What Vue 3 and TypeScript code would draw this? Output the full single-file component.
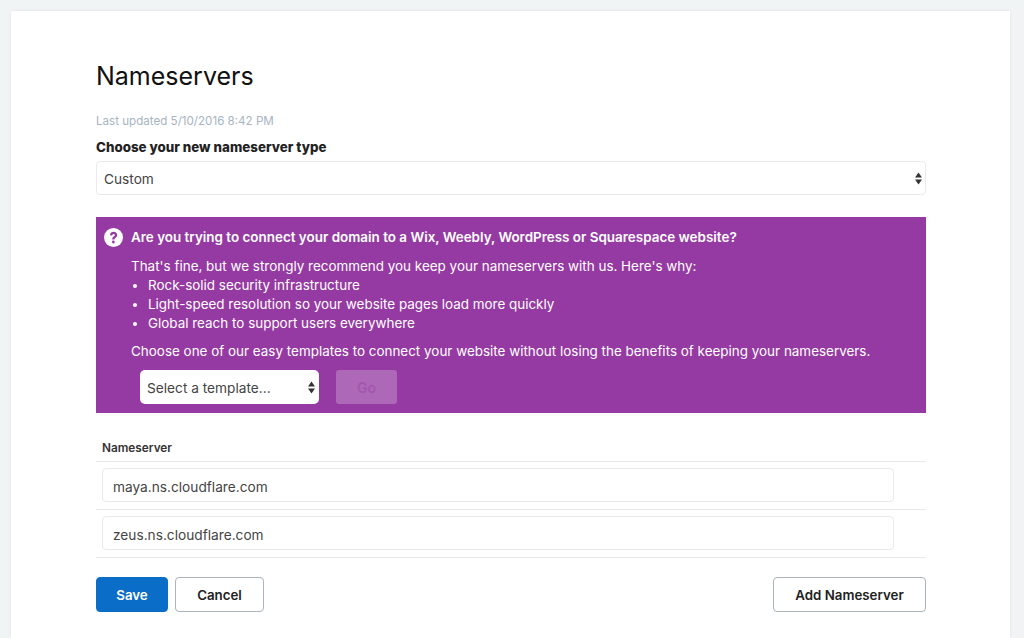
<script setup lang="ts">
const nameservers = ['maya.ns.cloudflare.com', 'zeus.ns.cloudflare.com']
const reasons = [
  'Rock-solid security infrastructure',
  'Light-speed resolution so your website pages load more quickly',
  'Global reach to support users everywhere',
]
</script>

<template>
  <div class="page">
    <div class="card">
      <h1>Nameservers</h1>
      <p class="updated">Last updated 5/10/2016 8:42 PM</p>
      <label class="type-label">Choose your new nameserver type</label>
      <div class="select-wrap">
        <select class="select">
          <option>Custom</option>
        </select>
        <svg class="arrows" width="7" height="13" viewBox="0 0 7 13">
          <path d="M3.5 0.5 L7 5.5 H0 Z M0 7.5 H7 L3.5 12.5 Z" fill="#333" />
        </svg>
      </div>

      <div class="notice">
        <div class="notice-head">
          <svg class="help" width="19" height="19" viewBox="0 0 19 19">
            <circle cx="9.5" cy="9.5" r="9.5" fill="#fff" />
            <path d="M5.9 7.3 C6 5.1 7.5 3.8 9.6 3.8 C11.7 3.8 13.2 5.1 13.2 7 C13.2 8.5 12.4 9.2 11.4 9.9 C10.7 10.4 10.5 10.7 10.5 11.6 H8.2 C8.2 10.1 8.6 9.3 9.7 8.6 C10.5 8.1 10.8 7.7 10.8 7.2 C10.8 6.5 10.3 6 9.6 6 C8.8 6 8.3 6.6 8.2 7.4 Z" fill="#963aa3" />
            <circle cx="9.35" cy="14" r="1.4" fill="#963aa3" />
          </svg>
          <strong>Are you trying to connect your domain to a Wix, Weebly, WordPress or Squarespace website?</strong>
        </div>
        <div class="notice-body">
          <p>That's fine, but we strongly recommend you keep your nameservers with us. Here's why:</p>
          <ul>
            <li v-for="r in reasons" :key="r">{{ r }}</li>
          </ul>
          <p class="choose">Choose one of our easy templates to connect your website without losing the benefits of keeping your nameservers.</p>
        </div>
        <div class="template-row">
          <div class="select-wrap template">
            <select class="select borderless">
              <option>Select a template...</option>
            </select>
            <svg class="arrows" width="7" height="13" viewBox="0 0 7 13">
              <path d="M3.5 0.5 L7 5.5 H0 Z M0 7.5 H7 L3.5 12.5 Z" fill="#333" />
            </svg>
          </div>
          <button class="go" disabled>Go</button>
        </div>
      </div>

      <div class="table-head">Nameserver</div>
      <div v-for="ns in nameservers" :key="ns" class="ns-row">
        <input class="ns-input" :value="ns" />
      </div>

      <div class="actions">
        <button class="btn primary">Save</button>
        <button class="btn cancel">Cancel</button>
        <button class="btn add">Add Nameserver</button>
      </div>
    </div>
  </div>
</template>

<style>
html,
body {
  margin: 0;
  background: #f1f4f5;
}
</style>

<style scoped>
.page {
  height: 638px;
  padding: 11px 14px 0 11px;
  box-sizing: border-box;
  overflow: hidden;
  font-family: Inter, "Liberation Sans", sans-serif;
  color: #333;
}

.card {
  height: 627px;
  box-sizing: border-box;
  background: #fff;
  padding: 47px 84px 0 85px;
  box-shadow: 0 0 3px rgba(0, 0, 0, 0.08);
}

h1 {
  margin: 0;
  font-size: 25px;
  line-height: 36px;
  font-weight: 400;
  color: #111;
}

.updated {
  margin: 18px 0 0;
  font-size: 11.6px;
  line-height: 18px;
  color: #a6b4bf;
}

.type-label {
  display: block;
  margin-top: 8px;
  font-size: 13.35px;
  line-height: 18px;
  font-weight: 800;
  color: #222;
}

.select-wrap {
  position: relative;
  margin-top: 5px;
}

.select {
  display: block;
  width: 100%;
  height: 34px;
  padding: 2px 7px 0;
  appearance: none;
  background: #fff;
  border: 1px solid #e8ebed;
  border-radius: 4px;
  font: 400 13.7px Inter, "Liberation Sans", sans-serif;
  color: #444;
}

.borderless {
  border: 0;
  border-radius: 5px;
}

.arrows {
  position: absolute;
  right: 4px;
  top: 11px;
}

.notice {
  margin-top: 22px;
  height: 196px;
  background: #963aa3;
  color: #fff;
  font-size: 13.45px;
}

.notice-head {
  display: flex;
  align-items: center;
  gap: 8px;
  padding: 10px 0 0 8px;
  height: 20px;
}

.notice-head strong {
  font-weight: 600;
}

.notice-body {
  margin: 10px 0 0 35px;
  line-height: 19px;
}

.notice-body p {
  margin: 0;
}

.notice-body ul {
  margin: 0;
  padding-left: 17px;
}

.notice-body .choose {
  margin-top: 9px;
}

.template-row {
  display: flex;
  gap: 17px;
  margin: 9px 0 0 44px;
}

.template {
  width: 179px;
  margin-top: 0;
}

.go {
  width: 61px;
  height: 34px;
  border: 0;
  border-radius: 3px;
  background: #ae68b8;
  color: #a257ad;
  font: 600 14px Inter, "Liberation Sans", sans-serif;
}

.table-head {
  margin-top: 26px;
  padding: 0 0 4px 6px;
  font-size: 11.8px;
  line-height: 18px;
  font-weight: 600;
  color: #333;
  border-bottom: 1px solid #e8ebed;
}

.ns-row {
  padding: 6px 32px 7px 6px;
  border-bottom: 1px solid #e8ebed;
}

.ns-input {
  display: block;
  width: 100%;
  height: 34px;
  box-sizing: border-box;
  padding: 3px 10px 0;
  background: #fff;
  border: 1px solid #e8ebed;
  border-radius: 4px;
  font: 400 13.7px Inter, "Liberation Sans", sans-serif;
  color: #444;
}

.actions {
  display: flex;
  gap: 7px;
  margin-top: 19px;
}

.btn {
  height: 35px;
  border-radius: 4px;
  font: 600 13.3px Inter, "Liberation Sans", sans-serif;
  background: #fff;
  color: #222;
  border: 1px solid #a9b4bd;
  padding: 0;
}

.primary {
  width: 72px;
  background: #0a6dc7;
  border-color: #0a6dc7;
  color: #fff;
}

.cancel {
  width: 89px;
}

.add {
  width: 153px;
  margin-left: auto;
}
</style>
